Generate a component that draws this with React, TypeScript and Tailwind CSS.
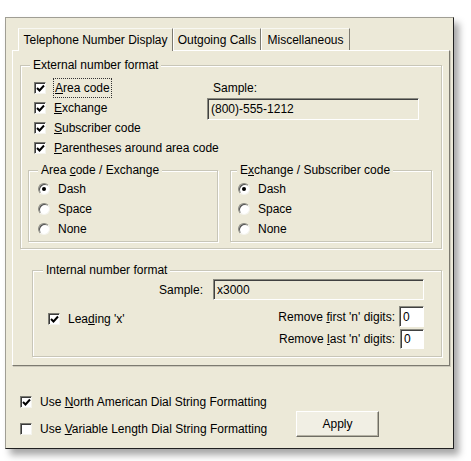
import React from 'react';

const font = { fontFamily: '"Liberation Sans", Arial, sans-serif' };

// a label where one letter is the keyboard accelerator
const Acc: React.FC<{ text: string; at: number }> = ({ text, at }) => (
  <>
    {text.slice(0, at)}
    <span className="underline underline-offset-[1px]">{text[at]}</span>
    {text.slice(at + 1)}
  </>
);

const CheckBox: React.FC<{ checked?: boolean }> = ({ checked }) => (
  <span className="w-[12px] h-[12px] bg-white border border-t-[#7a7a72] border-l-[#7a7a72] border-r-[#f4f4ee] border-b-[#f4f4ee] shadow-[inset_1px_1px_0_#3a3a3a] flex items-center justify-center shrink-0">
    {checked && (
      <svg width="9" height="9" viewBox="0 0 9 9">
        <path d="M1 4 L3.5 6.5 L8 1.5" fill="none" stroke="#000" strokeWidth="2" />
      </svg>
    )}
  </span>
);

const Check: React.FC<{ checked?: boolean; children: React.ReactNode; focus?: boolean }> = ({
  checked,
  children,
  focus,
}) => (
  <div className="h-[20px] flex items-center">
    <CheckBox checked={checked} />
    <span className={focus ? 'ml-[7px] px-[1px] border border-dotted border-[#333]' : 'ml-[8px]'}>{children}</span>
  </div>
);

const Radio: React.FC<{ checked?: boolean; children: React.ReactNode }> = ({ checked, children }) => (
  <div className="h-[20px] flex items-center">
    <span className="w-[12px] h-[12px] rounded-full bg-white border border-t-[#8a8a80] border-l-[#8a8a80] border-r-[#f4f4ee] border-b-[#f4f4ee] shadow-[inset_1px_1px_0_#505050] flex items-center justify-center shrink-0">
      {checked && <span className="w-[4px] h-[4px] rounded-full bg-black" />}
    </span>
    <span className="ml-[8px]">{children}</span>
  </div>
);

const Group: React.FC<{ label: React.ReactNode; className?: string; labelLeft?: string; children: React.ReactNode }> = ({
  label,
  className,
  labelLeft = 'left-[9px]',
  children,
}) => (
  <div
    className={`relative border border-[#c8c6b8] shadow-[inset_1px_1px_0_#fff,1px_1px_0_#fff] ${className ?? ''}`}
  >
    <span className={`absolute -top-[8px] ${labelLeft} px-[3px] leading-[14px] bg-[#ECE9D8]`}>{label}</span>
    {children}
  </div>
);

const Sunken: React.FC<{ className?: string; children?: React.ReactNode }> = ({ className, children }) => (
  <div
    className={`border border-t-[#8a8a80] border-l-[#8a8a80] border-r-[#fff] border-b-[#fff] shadow-[inset_1px_1px_0_#404040] flex items-center px-[3px] ${className ?? ''}`}
  >
    {children}
  </div>
);

const tabs = [
  { label: 'Telephone Number Display', w: 'w-[155px]', active: true },
  { label: 'Outgoing Calls', w: 'w-[88px]' },
  { label: 'Miscellaneous', w: 'w-[89px]' },
];

export default function App() {
  return (
    <div className="w-[471px] h-[461px] bg-white pt-[17px] pl-[5px] text-[12px] text-black" style={font}>
      <div className="w-[449px] h-[432px] bg-[#ECE9D8] border border-t-[#a09e94] border-l-[#a09e94] border-r-[#202020] border-b-[#202020] shadow-[5px_6px_7px_rgba(0,0,0,0.35)] flex flex-col">
        {/* tab strip */}
        <div className="flex ml-[12px] mt-[10px] h-[22px] relative z-10">
          {tabs.map((t) => (
            <div
              key={t.label}
              className={`${t.w} h-[22px] flex items-center justify-center border-l border-l-white border-t border-t-[#f8f8f2] border-r border-r-[#7c7a70] ${
                t.active ? 'bg-[#ECE9D8] h-[23px] -mb-px' : ''
              }`}
            >
              {t.label}
            </div>
          ))}
        </div>

        {/* tab panel */}
        <div className="ml-[6px] w-[438px] h-[316px] bg-[#ECE9D8] border border-t-white border-l-white border-r-[#7c7a70] border-b-[#7c7a70] shadow-[1px_1px_0_#ccc9bb] flex flex-col pl-[7px]">
          <Group label="External number format" className="mt-[14px] w-[422px] h-[184px] px-[7px]" labelLeft="left-[9px]">
            <div className="flex mt-[12px]">
              <div className="w-[179px] pl-[6px]">
                <Check checked focus>
                  <Acc text="Area code" at={0} />
                </Check>
                <Check checked>
                  <Acc text="Exchange" at={0} />
                </Check>
                <Check checked>
                  <Acc text="Subscriber code" at={0} />
                </Check>
              </div>
              <div className="flex flex-col">
                <div className="h-[20px] flex items-center pl-[6px]">Sample:</div>
                <Sunken className="w-[212px] h-[22px] bg-[#ECE9D8]">(800)-555-1212</Sunken>
              </div>
            </div>
            <div className="pl-[6px]">
              <Check checked>
                <Acc text="Parentheses around area code" at={0} />
              </Check>
            </div>
            <div className="flex mt-[12px] gap-[12px]">
              <Group label={<Acc text="Area code / Exchange" at={5} />} className="w-[190px] h-[72px] pl-[9px] pt-[8px]" labelLeft="left-[9px]">
                <Radio checked>Dash</Radio>
                <Radio>Space</Radio>
                <Radio>None</Radio>
              </Group>
              <Group label={<Acc text="Exchange / Subscriber code" at={1} />} className="w-[202px] h-[72px] pl-[7px] pt-[8px]" labelLeft="left-[6px]">
                <Radio checked>Dash</Radio>
                <Radio>Space</Radio>
                <Radio>None</Radio>
              </Group>
            </div>
          </Group>

          <Group label="Internal number format" className="mt-[21px] ml-[12px] w-[410px] h-[87px] pr-[17px] pt-[8px]" labelLeft="left-[10px]">
            <div className="flex justify-end items-center">
              <span className="mr-[10px]">Sample:</span>
              <Sunken className="w-[211px] h-[21px] bg-[#ECE9D8]">x3000</Sunken>
            </div>
            <div className="flex mt-[6px]">
              <div className="pl-[15px] pt-[3px] flex-1">
                <Check checked>
                  <Acc text="Leading 'x'" at={3} />
                </Check>
              </div>
              <div className="flex flex-col items-end gap-[2px]">
                <div className="flex items-center">
                  <span className="mr-[4px]">
                    <Acc text="Remove first 'n' digits:" at={7} />
                  </span>
                  <Sunken className="w-[25px] h-[21px] bg-white">0</Sunken>
                </div>
                <div className="flex items-center">
                  <span className="mr-[5px]">
                    <Acc text="Remove last 'n' digits:" at={7} />
                  </span>
                  <Sunken className="w-[24px] h-[20px] bg-white">0</Sunken>
                </div>
              </div>
            </div>
          </Group>
        </div>

        {/* options below the tabs */}
        <div className="flex mt-[26px] pl-[14px]">
          <div className="w-[276px] flex flex-col gap-[7px]">
            <Check checked>
              <Acc text="Use North American Dial String Formatting" at={4} />
            </Check>
            <Check>
              <Acc text="Use Variable Length Dial String Formatting" at={4} />
            </Check>
          </div>
          <button className="mt-[19px] w-[83px] h-[26px] bg-[#F1EFE4] border border-t-white border-l-white border-r-[#6f6d64] border-b-[#6f6d64] shadow-[inset_-1px_-1px_0_#b5b2a4]">
            Apply
          </button>
        </div>
      </div>
    </div>
  );
}
